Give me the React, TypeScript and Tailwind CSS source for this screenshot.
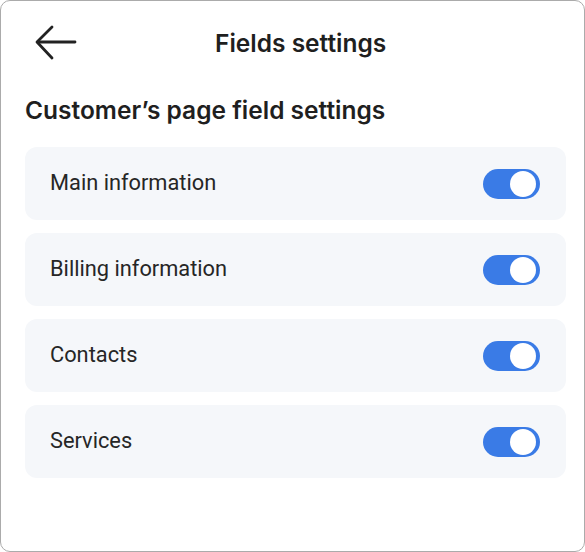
import { useState } from 'react';

// Field groups shown on the customer's page
const fieldGroups = [
  { id: 'main', label: 'Main information' },
  { id: 'billing', label: 'Billing information' },
  { id: 'contacts', label: 'Contacts' },
  { id: 'services', label: 'Services' },
];

function Toggle({ on, onChange }: { on: boolean; onChange: () => void }) {
  return (
    <button
      onClick={onChange}
      className={`w-[57px] h-[30px] rounded-full flex items-center px-[4px] ${
        on ? 'bg-[#3a7be6] justify-end' : 'bg-[#c9ced6] justify-start'
      }`}
    >
      <span className="w-[26px] h-[26px] rounded-full bg-white block" />
    </button>
  );
}

export default function App() {
  const [enabled, setEnabled] = useState<Record<string, boolean>>({
    main: true,
    billing: true,
    contacts: true,
    services: true,
  });

  return (
    <div className="w-[585px] h-[552px] bg-white border border-[#ababab] rounded-[10px] overflow-hidden font-['Inter',sans-serif] text-[#1f1f1f]">
      {/* header */}
      <div className="flex items-center h-[44px] mt-[20px] pl-[34px]">
        <svg width="42" height="36" viewBox="0 0 42 36" fill="none" stroke="#222" strokeWidth="2.8" strokeLinecap="round" strokeLinejoin="round">
          <path d="M40 17H3" />
          <path d="M17 2L2 17L17 33" />
        </svg>
        <h1 className="ml-[138px] text-[24.5px] font-semibold">Fields settings</h1>
      </div>

      <div className="pl-[24px] pr-[18px]">
        <h2 className="mt-[30px] text-[24.5px] leading-[30px] font-semibold">Customer’s page field settings</h2>

        <div className="mt-[22px] flex flex-col gap-[13px]">
          {fieldGroups.map((g) => (
            <div key={g.id} className="h-[73px] rounded-[12px] bg-[#f5f7fa] flex items-center justify-between pl-[25px] pr-[26px]">
              <span className="font-['Roboto',sans-serif] text-[21.8px] text-[#262626]">{g.label}</span>
              <Toggle
                on={enabled[g.id]}
                onChange={() => setEnabled((s) => ({ ...s, [g.id]: !s[g.id] }))}
              />
            </div>
          ))}
        </div>
      </div>
    </div>
  );
}
